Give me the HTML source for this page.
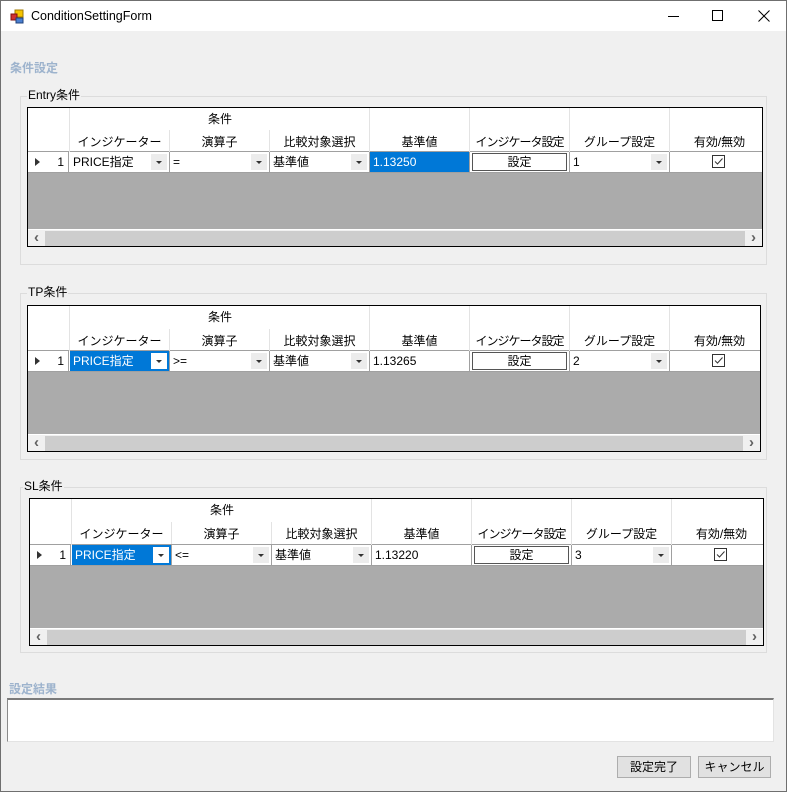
<!DOCTYPE html>
<html><head><meta charset="utf-8">
<style>
*{box-sizing:border-box;margin:0;padding:0}
body{width:787px;height:792px;background:#f0f0f0;font-family:"Liberation Sans","Noto Sans CJK JP",sans-serif;font-size:12px;color:#000;position:relative;overflow:hidden}
.abs{position:absolute}
.win{position:absolute;left:0;top:0;width:787px;height:792px;border:1px solid #6f6f6f;border-top:none}
.title{position:absolute;left:0;top:0;width:787px;height:31px;background:#fff;border:1px solid #6f6f6f;border-bottom:none}
.lbl{position:absolute;color:#9db3cd;font-weight:bold;font-size:12px}
.gb{position:absolute;border:1px solid #dcdcdc}
.gbt{position:absolute;background:#f0f0f0;padding:0 1px;font-size:12px;line-height:14px}
.grid{position:absolute;border:1px solid #000;background:#ababab;overflow:hidden}
.hdr{position:absolute;left:0;top:0;width:800px;height:44px;background:#fff;border-bottom:1px solid #a0a0a0}
.hc{position:absolute;top:22px;height:22px;width:100px;text-align:center;line-height:24px;border-right:1px solid #e3e3e3}
.hc2{position:absolute;top:0;height:22px;text-align:center;line-height:22px}
.vl{position:absolute;top:0;width:1px;height:44px;background:#e3e3e3}
.row{position:absolute;left:0;top:44px;width:800px;height:21px;background:#fff;border-bottom:1px solid #a0a0a0}
.c{position:absolute;top:0;height:20px;width:100px;border-right:1px solid #a0a0a0;line-height:20px;padding-left:3px;white-space:nowrap}
.dd{position:absolute;right:2px;top:2px;width:16px;height:16px;background:#ececec}
.dd:after{content:"";position:absolute;left:5px;top:7px;border-left:3px solid transparent;border-right:3px solid transparent;border-top:3px solid #333}
.sel{background:#0078d7;color:#fff}
.sel .dd{background:#fff}
.btn{position:absolute;left:2px;top:1px;width:95px;height:18px;border:1px solid #555;text-align:center;line-height:16px;background:#fff}
.chk{position:absolute;left:42px;top:3px;width:13px;height:13px;border:1px solid #333}
.sb{position:absolute;left:0;bottom:0;width:100%;height:17px;background:#f0f0f0;border-top:1px solid #fff}
.thumb{position:absolute;left:17px;right:17px;top:1px;height:15px;background:#cdcdcd}
.ar{position:absolute;top:0;width:17px;height:16px;text-align:center;line-height:15px;color:#606060;font-size:15px;font-weight:bold}
.rh{position:absolute;left:0;top:0;width:41px;height:20px;border-right:1px solid #a0a0a0;text-align:right;padding-right:4px;line-height:20px}
.rh:before{content:"";position:absolute;left:7px;top:6px;border-top:4px solid transparent;border-bottom:4px solid transparent;border-left:5px solid #333}
.pbtn{position:absolute;height:22px;background:#e1e1e1;border:1px solid #adadad;text-align:center;line-height:20px}
.nar{letter-spacing:-1px}
</style></head><body>
<div class="win"></div>
<div class="title">
  <svg class="abs" style="left:9px;top:8px" width="15" height="15" viewBox="0 0 15 15"><rect x="5" y="1" width="8" height="7" fill="#f5c400" stroke="#a07a00"/><rect x="1" y="5" width="6" height="6" fill="#d03030" stroke="#801010"/><rect x="6" y="9" width="7" height="5" fill="#4a7fd0" stroke="#20407a"/></svg>
  <div class="abs" style="left:30px;top:8px;font-size:12.5px">ConditionSettingForm</div>
  <div class="abs" style="left:667px;top:15px;width:11px;height:1px;background:#000"></div>
  <div class="abs" style="left:711px;top:9px;width:11px;height:11px;border:1px solid #000"></div>
  <svg class="abs" style="left:757px;top:9px" width="12" height="12"><path d="M0.5 0.5L11.5 11.5M11.5 0.5L0.5 11.5" stroke="#000" stroke-width="1"/></svg>
</div>

<div class="lbl" style="left:10px;top:59px">条件設定</div>

<!-- Entry -->
<div class="gb" style="left:20px;top:96px;width:747px;height:169px"></div>
<div class="gbt" style="left:27px;top:88px">Entry条件</div>
<div class="grid" style="left:27px;top:107px;width:736px;height:140px">
 <div class="hdr">
  <div class="hc2" style="left:42px;width:300px">条件</div>
  <div class="vl" style="left:41px"></div><div class="vl" style="left:341px"></div><div class="vl" style="left:441px"></div><div class="vl" style="left:541px"></div><div class="vl" style="left:641px"></div>
  <div class="hc" style="left:42px">インジケーター</div><div class="hc" style="left:142px">演算子</div><div class="hc" style="left:242px">比較対象選択</div><div class="hc" style="left:342px">基準値</div><div class="hc nar" style="left:442px">インジケータ設定</div><div class="hc" style="left:542px">グループ設定</div><div class="hc" style="left:642px">有効/無効</div>
 </div>
 <div class="row">
  <div class="rh">1</div>
  <div class="c" style="left:42px">PRICE指定<div class="dd"></div></div>
  <div class="c" style="left:142px">=<div class="dd"></div></div>
  <div class="c" style="left:242px">基準値<div class="dd"></div></div>
  <div class="c sel" style="left:342px">1.13250</div>
  <div class="c" style="left:442px"><div class="btn">設定</div></div>
  <div class="c" style="left:542px">1<div class="dd"></div></div>
  <div class="c" style="left:642px"><div class="chk"><svg width="11" height="11" style="position:absolute;left:0;top:0"><path d="M2 5.5L4.5 8L9.5 2.5" stroke="#333" fill="none"/></svg></div></div>
 </div>
 <div class="sb"><div class="ar" style="left:0">&lsaquo;</div><div class="thumb"></div><div class="ar" style="right:0">&rsaquo;</div></div>
</div>

<!-- TP -->
<div class="gb" style="left:20px;top:293px;width:747px;height:167px"></div>
<div class="gbt" style="left:27px;top:285px">TP条件</div>
<div class="grid" style="left:27px;top:305px;width:734px;height:147px">
 <div class="hdr" style="height:45px">
  <div class="hc2" style="left:42px;width:300px">条件</div>
  <div class="vl" style="left:41px;height:45px"></div><div class="vl" style="left:341px;height:45px"></div><div class="vl" style="left:441px;height:45px"></div><div class="vl" style="left:541px;height:45px"></div><div class="vl" style="left:641px;height:45px"></div>
  <div class="hc" style="left:42px;top:23px">インジケーター</div><div class="hc" style="left:142px;top:23px">演算子</div><div class="hc" style="left:242px;top:23px">比較対象選択</div><div class="hc" style="left:342px;top:23px">基準値</div><div class="hc nar" style="left:442px;top:23px">インジケータ設定</div><div class="hc" style="left:542px;top:23px">グループ設定</div><div class="hc" style="left:642px;top:23px">有効/無効</div>
 </div>
 <div class="row" style="top:45px">
  <div class="rh">1</div>
  <div class="c sel" style="left:42px">PRICE指定<div class="dd"></div></div>
  <div class="c" style="left:142px">&gt;=<div class="dd"></div></div>
  <div class="c" style="left:242px">基準値<div class="dd"></div></div>
  <div class="c" style="left:342px">1.13265</div>
  <div class="c" style="left:442px"><div class="btn">設定</div></div>
  <div class="c" style="left:542px">2<div class="dd"></div></div>
  <div class="c" style="left:642px"><div class="chk"><svg width="11" height="11" style="position:absolute;left:0;top:0"><path d="M2 5.5L4.5 8L9.5 2.5" stroke="#333" fill="none"/></svg></div></div>
 </div>
 <div class="sb"><div class="ar" style="left:0">&lsaquo;</div><div class="thumb"></div><div class="ar" style="right:0">&rsaquo;</div></div>
</div>

<!-- SL -->
<div class="gb" style="left:20px;top:487px;width:747px;height:166px"></div>
<div class="gbt" style="left:23px;top:479px">SL条件</div>
<div class="grid" style="left:29px;top:498px;width:735px;height:148px">
 <div class="hdr" style="height:46px">
  <div class="hc2" style="left:42px;width:300px">条件</div>
  <div class="vl" style="left:41px;height:46px"></div><div class="vl" style="left:341px;height:46px"></div><div class="vl" style="left:441px;height:46px"></div><div class="vl" style="left:541px;height:46px"></div><div class="vl" style="left:641px;height:46px"></div>
  <div class="hc" style="left:42px;top:23px">インジケーター</div><div class="hc" style="left:142px;top:23px">演算子</div><div class="hc" style="left:242px;top:23px">比較対象選択</div><div class="hc" style="left:342px;top:23px">基準値</div><div class="hc nar" style="left:442px;top:23px">インジケータ設定</div><div class="hc" style="left:542px;top:23px">グループ設定</div><div class="hc" style="left:642px;top:23px">有効/無効</div>
 </div>
 <div class="row" style="top:46px">
  <div class="rh">1</div>
  <div class="c sel" style="left:42px">PRICE指定<div class="dd"></div></div>
  <div class="c" style="left:142px">&lt;=<div class="dd"></div></div>
  <div class="c" style="left:242px">基準値<div class="dd"></div></div>
  <div class="c" style="left:342px">1.13220</div>
  <div class="c" style="left:442px"><div class="btn">設定</div></div>
  <div class="c" style="left:542px">3<div class="dd"></div></div>
  <div class="c" style="left:642px"><div class="chk"><svg width="11" height="11" style="position:absolute;left:0;top:0"><path d="M2 5.5L4.5 8L9.5 2.5" stroke="#333" fill="none"/></svg></div></div>
 </div>
 <div class="sb"><div class="ar" style="left:0">&lsaquo;</div><div class="thumb"></div><div class="ar" style="right:0">&rsaquo;</div></div>
</div>

<div class="lbl" style="left:9px;top:680px">設定結果</div>
<div class="abs" style="left:7px;top:698px;width:767px;height:44px;background:#fff;border-top:2px solid #7a7a7a;border-left:1px solid #8a8a8a;border-right:1px solid #e3e3e3;border-bottom:1px solid #e3e3e3"></div>

<div class="pbtn" style="left:617px;top:756px;width:74px">設定完了</div>
<div class="pbtn" style="left:698px;top:756px;width:73px">キャンセル</div>
</body></html>
